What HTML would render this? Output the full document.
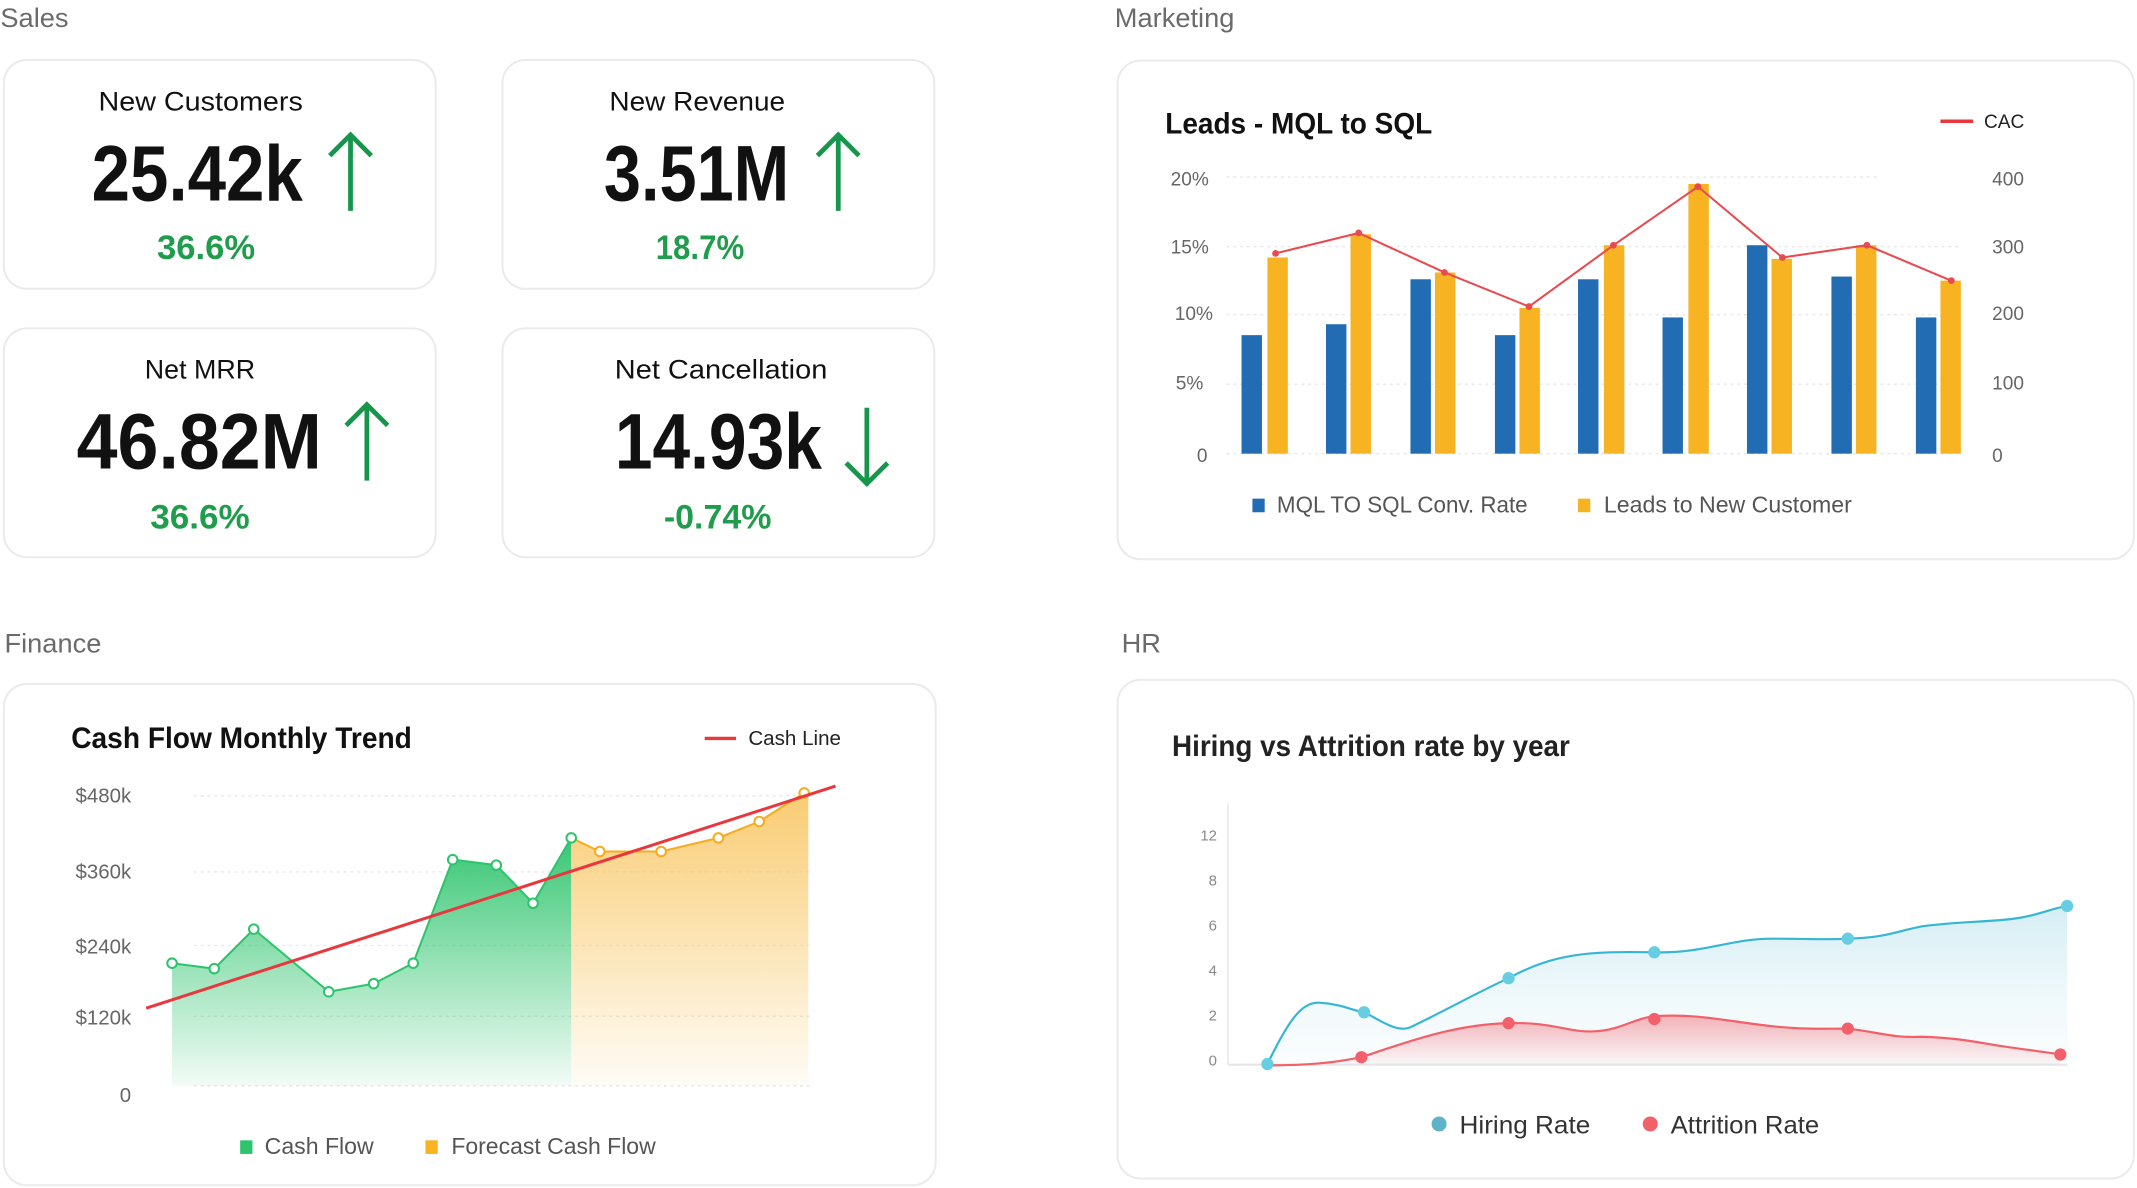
<!DOCTYPE html>
<html><head><meta charset="utf-8"><style>
html,body{margin:0;padding:0;background:#fff;overflow:hidden}
svg{display:block}
text{font-family:"Liberation Sans",sans-serif}
</style></head><body>
<svg width="2137" height="1188" viewBox="0 0 1568 872" xmlns="http://www.w3.org/2000/svg">
<defs>
<linearGradient id="gg" x1="0" y1="0" x2="0" y2="1"><stop offset="0" stop-color="#2ec46d" stop-opacity="0.95"/><stop offset="1" stop-color="#2ec46d" stop-opacity="0.06"/></linearGradient>
<linearGradient id="og" x1="0" y1="0" x2="0" y2="1"><stop offset="0" stop-color="#f8c35a" stop-opacity="0.85"/><stop offset="1" stop-color="#f8c35a" stop-opacity="0.05"/></linearGradient>
<linearGradient id="bg" x1="0" y1="0" x2="0" y2="1"><stop offset="0" stop-color="#b8e1ec" stop-opacity="0.6"/><stop offset="1" stop-color="#e0f3f8" stop-opacity="0.15"/></linearGradient>
<linearGradient id="rg" x1="0" y1="0" x2="0" y2="1"><stop offset="0" stop-color="#f26a72" stop-opacity="0.5"/><stop offset="1" stop-color="#f26a72" stop-opacity="0.03"/></linearGradient>
</defs>

<!-- Section labels -->
<g fill="#6b6b6b" font-size="20">
<text x="0" y="20">Sales</text>
<text x="818" y="20">Marketing</text>
<text x="3" y="479">Finance</text>
<text x="823" y="479">HR</text>
</g>

<!-- KPI cards -->
<g fill="#fff" stroke="#ebebeb" stroke-width="1.5">
<rect x="2.5" y="44" width="317" height="168" rx="17"/>
<rect x="368.5" y="44" width="317" height="168" rx="17"/>
<rect x="2.5" y="241" width="317" height="168" rx="17"/>
<rect x="368.5" y="241" width="317" height="168" rx="17"/>
</g>
<g fill="#111" font-size="20">
<text x="72" y="81" textLength="150" lengthAdjust="spacingAndGlyphs">New Customers</text>
<text x="447" y="81" textLength="129" lengthAdjust="spacingAndGlyphs">New Revenue</text>
<text x="106" y="278" textLength="81" lengthAdjust="spacingAndGlyphs">Net MRR</text>
<text x="451" y="278" textLength="156" lengthAdjust="spacingAndGlyphs">Net Cancellation</text>
</g>
<g fill="#111" font-size="58" font-weight="bold">
<text x="67" y="147" textLength="155" lengthAdjust="spacingAndGlyphs">25.42k</text>
<text x="443" y="147" textLength="136" lengthAdjust="spacingAndGlyphs">3.51M</text>
<text x="56" y="344" textLength="180" lengthAdjust="spacingAndGlyphs">46.82M</text>
<text x="451" y="344" textLength="152" lengthAdjust="spacingAndGlyphs">14.93k</text>
</g>
<g fill="#1f9d4c" font-size="25" font-weight="bold">
<text x="115" y="190" textLength="72" lengthAdjust="spacingAndGlyphs">36.6%</text>
<text x="481" y="190" textLength="65" lengthAdjust="spacingAndGlyphs">18.7%</text>
<text x="110" y="388" textLength="73" lengthAdjust="spacingAndGlyphs">36.6%</text>
<text x="487" y="388" textLength="79" lengthAdjust="spacingAndGlyphs">-0.74%</text>
</g>
<g stroke="#15964a" stroke-width="3.5" fill="none" stroke-linecap="square">
<path d="M257,153V100M243,113L257,99L271,113"/>
<path d="M615,153V100M601,113L615,99L629,113"/>
<path d="M269,351V298M255,311L269,297L283,311"/>
<path d="M636,301V354M622,341L636,355L650,341"/>
</g>

<!-- Marketing card -->
<rect x="820" y="44.5" width="746" height="366" rx="17" fill="#fff" stroke="#ebebeb" stroke-width="1.5"/>
<text x="855" y="98" font-size="22" font-weight="bold" fill="#111" textLength="196" lengthAdjust="spacingAndGlyphs">Leads - MQL to SQL</text>
<line x1="1424" y1="89" x2="1448" y2="89" stroke="#e8383d" stroke-width="2.5"/>
<text x="1456" y="94" font-size="14" fill="#222">CAC</text>
<g stroke="#e6e6e6" stroke-dasharray="2,3" stroke-width="1">
<line x1="900" y1="130" x2="1380" y2="130"/><line x1="900" y1="181" x2="1440" y2="181"/><line x1="900" y1="231" x2="1440" y2="231"/><line x1="900" y1="282" x2="1440" y2="282"/><line x1="900" y1="333" x2="1440" y2="333"/>
</g>
<g fill="#666" font-size="14">
<text x="887" y="136" text-anchor="end">20%</text>
<text x="887" y="186" text-anchor="end">15%</text>
<text x="890" y="235" text-anchor="end">10%</text>
<text x="883" y="286" text-anchor="end">5%</text>
<text x="886" y="339" text-anchor="end">0</text>
<text x="1462" y="136">400</text>
<text x="1462" y="186">300</text>
<text x="1462" y="235">200</text>
<text x="1462" y="286">100</text>
<text x="1462" y="339">0</text>
</g>
<g fill="#226cb3">
<rect x="911" y="246" width="15" height="87"/><rect x="973" y="238" width="15" height="95"/><rect x="1035" y="205" width="15" height="128"/><rect x="1097" y="246" width="15" height="87"/><rect x="1158" y="205" width="15" height="128"/><rect x="1220" y="233" width="15" height="100"/><rect x="1282" y="180" width="15" height="153"/><rect x="1344" y="203" width="15" height="130"/><rect x="1406" y="233" width="15" height="100"/>
</g>
<g fill="#f8b323">
<rect x="930" y="189" width="15" height="144"/><rect x="991" y="172" width="15" height="161"/><rect x="1053" y="200" width="15" height="133"/><rect x="1115" y="226" width="15" height="107"/><rect x="1177" y="180" width="15" height="153"/><rect x="1239" y="135" width="15" height="198"/><rect x="1300" y="190" width="15" height="143"/><rect x="1362" y="180" width="15" height="153"/><rect x="1424" y="206" width="15" height="127"/>
</g>
<polyline points="936,186 997,171 1060,200 1122,225 1184,180 1246,137 1308,189 1370,180 1432,206" fill="none" stroke="#e84a4f" stroke-width="1.5"/>
<g fill="#e84a4f"><circle cx="936" cy="186" r="2.5"/><circle cx="997" cy="171" r="2.5"/><circle cx="1060" cy="200" r="2.5"/><circle cx="1122" cy="225" r="2.5"/><circle cx="1184" cy="180" r="2.5"/><circle cx="1246" cy="137" r="2.5"/><circle cx="1308" cy="189" r="2.5"/><circle cx="1370" cy="180" r="2.5"/><circle cx="1432" cy="206" r="2.5"/></g>
<rect x="919" y="366" width="9" height="10" fill="#226cb3"/>
<text x="937" y="376" font-size="17" fill="#555" textLength="184" lengthAdjust="spacingAndGlyphs">MQL TO SQL Conv. Rate</text>
<rect x="1158" y="366" width="9" height="10" fill="#f8b323"/>
<text x="1177" y="376" font-size="17" fill="#555" textLength="182" lengthAdjust="spacingAndGlyphs">Leads to New Customer</text>

<!-- Finance card -->
<rect x="2.5" y="502" width="684" height="368" rx="17" fill="#fff" stroke="#ebebeb" stroke-width="1.5"/>
<text x="52" y="549" font-size="22" font-weight="bold" fill="#111" textLength="250" lengthAdjust="spacingAndGlyphs">Cash Flow Monthly Trend</text>
<line x1="517" y1="542" x2="540" y2="542" stroke="#e8383d" stroke-width="2.5"/>
<text x="549" y="547" font-size="15" fill="#222" textLength="68" lengthAdjust="spacingAndGlyphs">Cash Line</text>
<g stroke="#e6e6e6" stroke-dasharray="2,3"><line x1="142" y1="584" x2="595" y2="584"/><line x1="142" y1="640" x2="595" y2="640"/><line x1="142" y1="694" x2="595" y2="694"/><line x1="142" y1="746" x2="595" y2="746"/><line x1="142" y1="797" x2="595" y2="797"/></g>
<g fill="#666" font-size="15" text-anchor="end">
<text x="96" y="589">$480k</text><text x="96" y="645">$360k</text><text x="96" y="700">$240k</text><text x="96" y="752">$120k</text><text x="96" y="809">0</text>
</g>
<path d="M126,707 157,711 186,682 241,728 274,722 303,707 332,631 364,635 391,663 419,615 V797 H126Z" fill="url(#gg)"/>
<path d="M419,615 440,625 485,625 527,615 557,603 590,582 593,582 V797 H419Z" fill="url(#og)"/>
<polyline points="126,707 157,711 186,682 241,728 274,722 303,707 332,631 364,635 391,663 419,615" fill="none" stroke="#2ec46d" stroke-width="1.5"/>
<polyline points="419,615 440,625 485,625 527,615 557,603 590,582" fill="none" stroke="#f5ac1f" stroke-width="1.5"/>
<g fill="#fff" stroke="#2ec46d" stroke-width="1.5"><circle cx="126" cy="707" r="3.5"/><circle cx="157" cy="711" r="3.5"/><circle cx="186" cy="682" r="3.5"/><circle cx="241" cy="728" r="3.5"/><circle cx="274" cy="722" r="3.5"/><circle cx="303" cy="707" r="3.5"/><circle cx="332" cy="631" r="3.5"/><circle cx="364" cy="635" r="3.5"/><circle cx="391" cy="663" r="3.5"/><circle cx="419" cy="615" r="3.5"/></g>
<g fill="#fff" stroke="#f5ac1f" stroke-width="1.5"><circle cx="440" cy="625" r="3.5"/><circle cx="485" cy="625" r="3.5"/><circle cx="527" cy="615" r="3.5"/><circle cx="557" cy="603" r="3.5"/><circle cx="590" cy="582" r="3.5"/></g>
<line x1="107" y1="740" x2="613" y2="577" stroke="#e8383d" stroke-width="2.2"/>
<rect x="176" y="837" width="9" height="10" fill="#2ec46d"/>
<text x="194" y="847" font-size="17" fill="#555" textLength="80" lengthAdjust="spacingAndGlyphs">Cash Flow</text>
<rect x="312" y="837" width="9" height="10" fill="#f8b323"/>
<text x="331" y="847" font-size="17" fill="#555" textLength="150" lengthAdjust="spacingAndGlyphs">Forecast Cash Flow</text>

<!-- HR card -->
<rect x="820" y="499" width="746" height="366" rx="17" fill="#fff" stroke="#ebebeb" stroke-width="1.5"/>
<text x="860" y="555" font-size="22" font-weight="bold" fill="#222" textLength="292" lengthAdjust="spacingAndGlyphs">Hiring vs Attrition rate by year</text>
<line x1="901" y1="590" x2="901" y2="781" stroke="#e6e6e6"/>
<line x1="901" y1="781.5" x2="1517" y2="781.5" stroke="#e6e6e6" stroke-width="1.5"/>
<g fill="#888" font-size="11" text-anchor="end">
<text x="893" y="617">12</text><text x="893" y="650">8</text><text x="893" y="683">6</text><text x="893" y="716">4</text><text x="893" y="749">2</text><text x="893" y="782">0</text>
</g>
<path d="M930,781 C945,750 955,735 968,736 C985,737 993,742 1001,743 C1015,750 1025,758 1035,754 C1060,742 1085,728 1107,718 C1140,700 1165,698 1214,699 C1250,700 1270,689 1300,689 C1330,689 1340,690 1356,689 C1385,688 1390,684 1410,680 C1440,676 1460,677 1480,674 C1495,672 1505,667 1517,665 V781 H930Z" fill="url(#bg)"/>
<path d="M930,782 C960,782 980,780 999,776 C1040,762 1070,752 1107,751 C1140,750 1150,758 1170,757 C1190,756 1200,747 1214,746 C1240,744 1260,748 1290,752 C1320,756 1335,755 1356,755 C1380,758 1390,762 1410,761 C1440,762 1450,765 1470,768 C1490,771 1500,772 1512,774 V781 H930Z" fill="url(#rg)"/>
<path d="M930,781 C945,750 955,735 968,736 C985,737 993,742 1001,743 C1015,750 1025,758 1035,754 C1060,742 1085,728 1107,718 C1140,700 1165,698 1214,699 C1250,700 1270,689 1300,689 C1330,689 1340,690 1356,689 C1385,688 1390,684 1410,680 C1440,676 1460,677 1480,674 C1495,672 1505,667 1517,665" fill="none" stroke="#35b6d6" stroke-width="1.6"/>
<path d="M930,782 C960,782 980,780 999,776 C1040,762 1070,752 1107,751 C1140,750 1150,758 1170,757 C1190,756 1200,747 1214,746 C1240,744 1260,748 1290,752 C1320,756 1335,755 1356,755 C1380,758 1390,762 1410,761 C1440,762 1450,765 1470,768 C1490,771 1500,772 1512,774" fill="none" stroke="#f4606a" stroke-width="1.6"/>
<g fill="#f4606a"><circle cx="999" cy="776" r="4.5"/><circle cx="1107" cy="751" r="4.5"/><circle cx="1214" cy="748" r="4.5"/><circle cx="1356" cy="755" r="4.5"/><circle cx="1512" cy="774" r="4.5"/></g>
<g fill="#66cde2"><circle cx="930" cy="781" r="4.5"/><circle cx="1001" cy="743" r="4.5"/><circle cx="1107" cy="718" r="4.5"/><circle cx="1214" cy="699" r="4.5"/><circle cx="1356" cy="689" r="4.5"/><circle cx="1517" cy="665" r="4.5"/></g>
<circle cx="1056" cy="825" r="5.5" fill="#5fb3c9"/>
<text x="1071" y="832" font-size="18" fill="#333" textLength="96" lengthAdjust="spacingAndGlyphs">Hiring Rate</text>
<circle cx="1211" cy="825" r="5.5" fill="#f4606a"/>
<text x="1226" y="832" font-size="18" fill="#333" textLength="109" lengthAdjust="spacingAndGlyphs">Attrition Rate</text>
</svg>
</body></html>
